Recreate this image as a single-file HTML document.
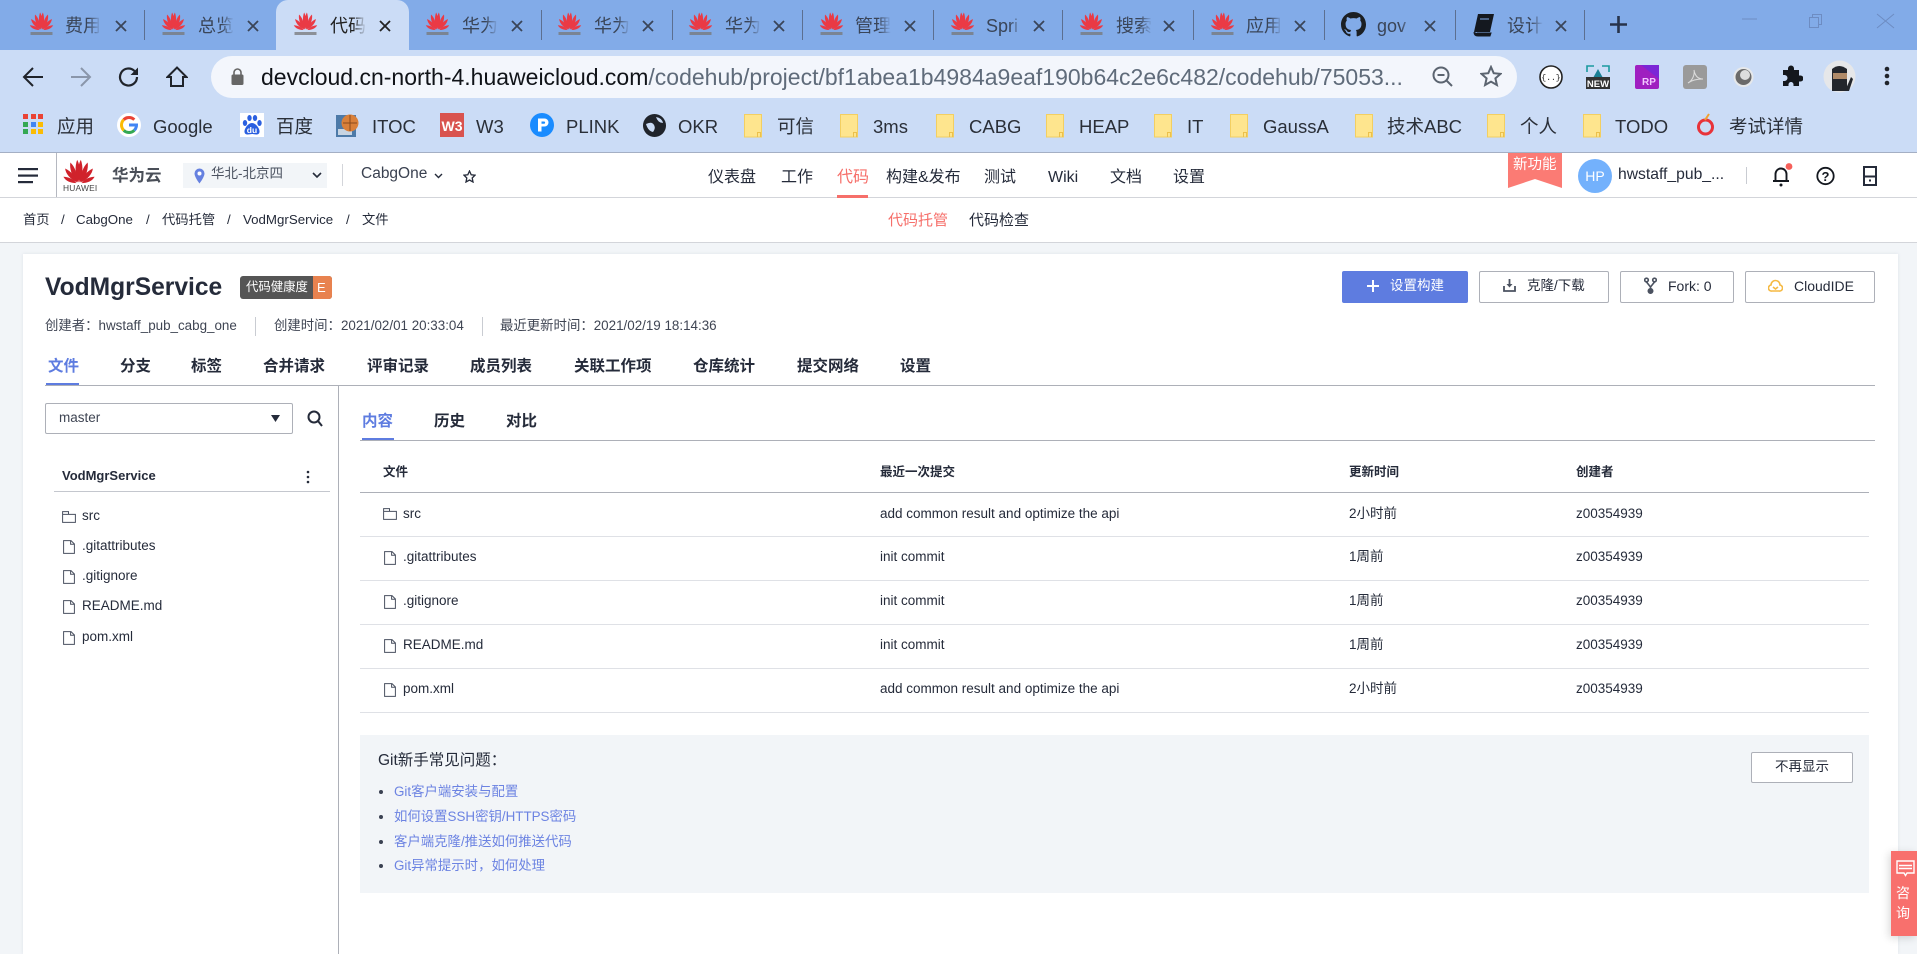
<!DOCTYPE html>
<html lang="zh"><head><meta charset="utf-8"><title>VodMgrService</title>
<style>
html,body{margin:0;padding:0;width:1917px;height:954px;overflow:hidden;background:#f2f5f8;font-family:"Liberation Sans","Noto Sans CJK SC",sans-serif;color:#252b3a}
.a{position:absolute}
.t{position:absolute;white-space:nowrap;line-height:20px;height:20px;margin-top:-10px}
.s{position:absolute}
.tabt{font-size:18px;color:#3a4558;overflow:hidden;width:36px;-webkit-mask-image:linear-gradient(90deg,#000 65%,transparent);mask-image:linear-gradient(90deg,#000 65%,transparent);line-height:24px;height:24px;margin-top:-12px}
.x{font-size:0}
.sep{position:absolute;top:10px;width:1px;height:30px;background:#5c6f90}
.bm{font-size:18.5px;color:#2a2f38}
.nav{font-size:16px;color:#252b3a}
.bc{font-size:13.3px;color:#252b3a}
.tb{font-size:15.5px;font-weight:700;color:#252b3a}
.cell{font-size:13.5px;color:#252b3a}
.th{font-size:12.5px;font-weight:700;color:#252b3a}
.ln{position:absolute;height:1px;background:#dfe1e6}
.btn{position:absolute;box-sizing:border-box;border:1px solid #adb0b8;border-radius:2px;background:#fff;height:32px;top:271px}
.link{font-size:13.4px;color:#6c83e2}
.dot{position:absolute;width:4px;height:4px;border-radius:50%;background:#3b4252;left:379px}
</style></head><body>
<svg width="0" height="0" style="position:absolute"><defs>
<symbol id="hw" viewBox="0 0 24 24"><g fill="#ea3a45"><path id="p1" d="M11.5 17.5C9 13 8.8 5 10.6 0.5C13 4 13 12 11.5 17.5Z"/><path d="M12.5 17.5C15 13 15.2 5 13.4 0.5C11 4 11 12 12.5 17.5Z"/><path d="M11 17.5C6.5 13 4.8 7 5.5 2.5C9 5.5 11 12 11 17.5Z"/><path d="M13 17.5C17.5 13 19.2 7 18.5 2.5C15 5.5 13 12 13 17.5Z"/><path d="M10.5 17.5C5.5 15 2 11 1.6 7C6 9 9.5 13 10.5 17.5Z"/><path d="M13.5 17.5C18.5 15 22 11 22.4 7C18 9 14.5 13 13.5 17.5Z"/><path d="M10 18C6 18 2 16.5 .3 13.2C4 13.2 8 15 10 18Z"/><path d="M14 18C18 18 22 16.5 23.7 13.2C20 13.2 16 15 14 18Z"/></g><rect x="1" y="20" width="22" height="3" fill="#777" opacity=".75"/></symbol>
<symbol id="xx" viewBox="0 0 12 12"><path d="M1 1L11 11M11 1L1 11" stroke="currentColor" stroke-width="1.8" fill="none"/></symbol>
<symbol id="fo" viewBox="0 0 18 24"><path d="M.5.5H17.5V23H.5Z" fill="#fee58e" stroke="#f3cf61"/><path d="M13.5 23V18.5h3V23" fill="none" stroke="#ecc04b"/></symbol>
<symbol id="fi" viewBox="0 0 12 14"><path d="M.6.6H8L11.4 4V13.4H.6ZM7.6.6V4.3H11.4" fill="none" stroke="#4a5160" stroke-width="1"/></symbol>
<symbol id="di" viewBox="0 0 14 12"><path d="M.6 3.4H13.4V11.4H.6ZM.6 3.4V.6H6.5V3.4" fill="none" stroke="#4a5160" stroke-width="1"/></symbol>
</defs></svg>

<!-- tab strip -->
<div class="a" style="left:0;top:0;width:1917px;height:50px;background:#82abe8"></div>
<div class="a" style="left:276px;top:0;width:133px;height:50px;background:#cbdcf6;border-radius:12px 12px 0 0"></div>
<svg class="s" style="left:29px;top:12px" width="25" height="24"><use href="#hw"/></svg><div class="t tabt" style="left:65px;top:26px">费用</div><svg class="s" style="left:115px;top:20px;color:#3a4558" width="12" height="12"><use href="#xx"/></svg><div class="sep" style="left:144px"></div>
<svg class="s" style="left:161px;top:12px" width="25" height="24"><use href="#hw"/></svg><div class="t tabt" style="left:198px;top:26px">总览</div><svg class="s" style="left:247px;top:20px;color:#3a4558" width="12" height="12"><use href="#xx"/></svg>
<svg class="s" style="left:293px;top:12px" width="25" height="24"><use href="#hw"/></svg><div class="t tabt" style="left:330px;top:26px;color:#222">代码</div><svg class="s" style="left:379px;top:20px;color:#222" width="12" height="12"><use href="#xx"/></svg>
<svg class="s" style="left:425px;top:12px" width="25" height="24"><use href="#hw"/></svg><div class="t tabt" style="left:462px;top:26px">华为</div><svg class="s" style="left:511px;top:20px;color:#3a4558" width="12" height="12"><use href="#xx"/></svg><div class="sep" style="left:541px"></div>
<svg class="s" style="left:557px;top:12px" width="25" height="24"><use href="#hw"/></svg><div class="t tabt" style="left:594px;top:26px">华为</div><svg class="s" style="left:642px;top:20px;color:#3a4558" width="12" height="12"><use href="#xx"/></svg><div class="sep" style="left:672px"></div>
<svg class="s" style="left:688px;top:12px" width="25" height="24"><use href="#hw"/></svg><div class="t tabt" style="left:725px;top:26px">华为</div><svg class="s" style="left:773px;top:20px;color:#3a4558" width="12" height="12"><use href="#xx"/></svg><div class="sep" style="left:802px"></div>
<svg class="s" style="left:819px;top:12px" width="25" height="24"><use href="#hw"/></svg><div class="t tabt" style="left:855px;top:26px">管理</div><svg class="s" style="left:904px;top:20px;color:#3a4558" width="12" height="12"><use href="#xx"/></svg><div class="sep" style="left:933px"></div>
<svg class="s" style="left:950px;top:12px" width="25" height="24"><use href="#hw"/></svg><div class="t tabt" style="left:986px;top:26px">Spri</div><svg class="s" style="left:1033px;top:20px;color:#3a4558" width="12" height="12"><use href="#xx"/></svg><div class="sep" style="left:1062px"></div>
<svg class="s" style="left:1079px;top:12px" width="25" height="24"><use href="#hw"/></svg><div class="t tabt" style="left:1116px;top:26px">搜索</div><svg class="s" style="left:1163px;top:20px;color:#3a4558" width="12" height="12"><use href="#xx"/></svg><div class="sep" style="left:1193px"></div>
<svg class="s" style="left:1210px;top:12px" width="25" height="24"><use href="#hw"/></svg><div class="t tabt" style="left:1246px;top:26px">应用</div><svg class="s" style="left:1294px;top:20px;color:#3a4558" width="12" height="12"><use href="#xx"/></svg><div class="sep" style="left:1324px"></div>
<svg class="s" style="left:1341px;top:12px" width="25" height="25" viewBox="0 0 16 16"><path fill="#1b1f23" d="M8 0C3.58 0 0 3.58 0 8c0 3.54 2.29 6.53 5.47 7.59.4.07.55-.17.55-.38v-1.34c-2.23.48-2.69-1.07-2.69-1.07-.36-.92-.89-1.17-.89-1.17-.73-.5.05-.49.05-.49.8.06 1.23.82 1.23.82.71 1.22 1.87.87 2.33.66.07-.52.28-.87.5-1.07-1.77-.2-3.64-.89-3.64-3.95 0-.87.31-1.59.82-2.15-.08-.2-.36-1.02.08-2.12 0 0 .67-.21 2.2.82.64-.18 1.32-.27 2-.27s1.36.09 2 .27c1.53-1.04 2.2-.82 2.2-.82.44 1.1.16 1.92.08 2.12.51.56.82 1.27.82 2.15 0 3.07-1.87 3.75-3.65 3.95.29.25.54.73.54 1.48v2.2c0 .21.15.46.55.38A8 8 0 0016 8c0-4.42-3.58-8-8-8z"/></svg><div class="t tabt" style="left:1377px;top:26px">gov</div><svg class="s" style="left:1424px;top:20px;color:#3a4558" width="12" height="12"><use href="#xx"/></svg><div class="sep" style="left:1455px"></div>
<svg class="s" style="left:1473px;top:13px" width="22" height="24" viewBox="0 0 22 24"><path d="M5 1H21L17 19H1Z" fill="#14181f"/><path d="M1 19C1 22 3 23 5 23H17L18 20H4" fill="#14181f" stroke="#14181f"/><path d="M7 6H16" stroke="#82abe8"/></svg><div class="t tabt" style="left:1507px;top:26px">设计</div><svg class="s" style="left:1555px;top:20px;color:#3a4558" width="12" height="12"><use href="#xx"/></svg><div class="sep" style="left:1584px"></div>
<svg class="s" style="left:1609px;top:15px" width="19" height="19"><path d="M9.5 1V18M1 9.5H18" stroke="#27334a" stroke-width="2.6"/></svg>
<svg class="s" style="left:1740px;top:0" width="160" height="32" fill="none" stroke="#6d8cc2" stroke-width="1"><path d="M2 19H17"/><path d="M69.500 17.500H78.500V27.500H69.500ZM72.500 17.500V14.500H81.500V24.500H78.500"/><path d="M137 14L154 28M154 14L137 28"/></svg>

<!-- toolbar -->
<div class="a" style="left:0;top:50px;width:1917px;height:102px;background:#cbdcf6"></div>
<div class="a" style="left:0;top:152px;width:1917px;height:1px;background:#a4afc4"></div>
<div class="a" style="left:211px;top:56px;width:1306px;height:42px;border-radius:21px;background:#f3f6fc"></div>
<svg class="s" style="left:22px;top:66px" width="22" height="22" fill="none" stroke="#20242b" stroke-width="2"><path d="M21 11H2M11 2L2 11L11 20"/></svg>
<svg class="s" style="left:70px;top:66px" width="22" height="22" fill="none" stroke="#8a96aa" stroke-width="2"><path d="M1 11H20M11 2L20 11L11 20"/></svg>
<svg class="s" style="left:118px;top:66px" width="22" height="22" fill="none" stroke="#20242b" stroke-width="2.2"><path d="M19 11A8.500 8.500 0 1 1 16.500 5L19 7.500"/><path d="M20 1.500V9H12.500Z" fill="#20242b" stroke="none"/></svg>
<svg class="s" style="left:166px;top:66px" width="22" height="22" fill="none" stroke="#20242b" stroke-width="2"><path d="M1.500 11L11 1.500L20.500 11H17V20H5V11Z"/></svg>
<svg class="s" style="left:231px;top:68px" width="13" height="18"><path d="M3 7V4.500A3.500 3.500 0 0 1 10 4.500V7" fill="none" stroke="#666" stroke-width="1.6"/><rect x="0.5" y="6.5" width="12" height="10.5" rx="1.5" fill="#666"/></svg>
<div class="t" style="left:261px;top:77px;font-size:23px;line-height:26px;height:26px;margin-top:-13px;color:#101318">devcloud.cn-north-4.huaweicloud.com<span style="color:#5f6b7a">/codehub/project/bf1abea1b4984a9eaf190b64c2e6c482/codehub/75053...</span></div>
<svg class="s" style="left:1432px;top:66px" width="22" height="22" fill="none" stroke="#5b6470" stroke-width="2"><circle cx="9" cy="9" r="7.5"/><path d="M14.500 14.500L20 20M5.500 9H12.500"/></svg>
<svg class="s" style="left:1480px;top:65px" width="22" height="22" fill="none" stroke="#5b6470" stroke-width="2"><path d="M11 2L13.700 8.200L20.500 8.900L15.400 13.400L16.900 20L11 16.600L5.100 20L6.600 13.400L1.500 8.900L8.300 8.200Z"/></svg>
<svg class="s" style="left:1539px;top:65px" width="24" height="24"><circle cx="12" cy="12" r="11" fill="#fff" stroke="#222" stroke-width="1.6"/><text x="12" y="15" text-anchor="middle" font-size="8" font-family="Liberation Mono" fill="#222">{..}</text></svg>
<svg class="s" style="left:1586px;top:65px" width="24" height="24"><path d="M1 7V1H8M16 1H23V7" fill="none" stroke="#1a9a9f" stroke-width="1.6"/><path d="M7 13L12 4L17 13Z" fill="#1a7f94"/><rect y="12" width="24" height="12" fill="#333"/><text x="12" y="22" text-anchor="middle" font-size="9.5" font-weight="700" fill="#fff">NEW</text></svg>
<svg class="s" style="left:1635px;top:65px" width="24" height="24"><rect width="24" height="24" rx="2" fill="#9f1fc0"/><path d="M6 0H24V14Z" fill="#7b26d6"/><text x="14" y="20" text-anchor="middle" font-size="10" font-weight="700" fill="#f2c8ff">RP</text></svg>
<svg class="s" style="left:1683px;top:65px" width="24" height="24"><rect width="24" height="24" rx="3" fill="#9a9a9a"/><path d="M5 18C9 16 12 10 11 5C12 11 15 14 20 14C14 14 9 15 5 18Z" fill="none" stroke="#ddd" stroke-width="1"/></svg>
<svg class="s" style="left:1732px;top:65px" width="23" height="24"><circle cx="11.5" cy="12" r="10" fill="#e6e8ea"/><circle cx="11.5" cy="12" r="8" fill="#6a6a6a"/><circle cx="13" cy="10" r="5" fill="#ddd"/></svg>
<svg class="s" style="left:1780px;top:65px" width="23" height="23"><path d="M8 3.500A3 3 0 0 1 14 3.500V5H19V10.500H20.500A3 3 0 0 1 20.500 16.500H19V21H13.500V19.500A2.500 2.500 0 0 0 8.500 19.500V21H3V16H4.500A3 3 0 0 0 4.500 10H3V5H8Z" fill="#14171c"/></svg>
<svg class="s" style="left:1823px;top:60px" width="33" height="33"><circle cx="16.5" cy="16.5" r="16" fill="#e6e7e9"/><path d="M9 9Q16 3 24 9V31H9Z" fill="#23262c"/><rect x="10" y="13" width="14" height="6" fill="#b08a68"/><path d="M22 31L28 17L30 19L26 31Z" fill="#23262c"/></svg>
<svg class="s" style="left:1884px;top:66px" width="6" height="20" fill="#20242b"><circle cx="3" cy="3" r="2.3"/><circle cx="3" cy="10" r="2.3"/><circle cx="3" cy="17" r="2.3"/></svg>

<!-- bookmarks -->
<svg class="s" style="left:23px;top:114px" width="20" height="20"><g><rect width="5" height="5" x="0" y="0" fill="#ea4335"/><rect width="5" height="5" x="8" y="0" fill="#ea4335"/><rect width="5" height="5" x="15" y="0" fill="#ea4335"/><rect width="5" height="5" x="0" y="8" fill="#34a853"/><rect width="5" height="5" x="8" y="8" fill="#4285f4"/><rect width="5" height="5" x="15" y="8" fill="#fbbc04"/><rect width="5" height="5" x="0" y="15" fill="#34a853"/><rect width="5" height="5" x="8" y="15" fill="#fbbc04"/><rect width="5" height="5" x="15" y="15" fill="#fbbc04"/></g></svg>
<div class="t bm" style="left:57px;top:127px">应用</div>
<svg class="s" style="left:117px;top:113px" width="24" height="24" viewBox="0 0 24 24" fill="none" stroke-width="3"><circle cx="12" cy="12" r="12" fill="#fff" stroke="none"/><path d="M12 12H19.500A7.500 7.500 0 0 1 17.300 17.300" stroke="#4285f4"/><path d="M17.300 17.300A7.500 7.500 0 0 1 6.700 17.300" stroke="#34a853"/><path d="M6.700 17.300A7.500 7.500 0 0 1 6.700 6.700" stroke="#fbbc04"/><path d="M6.700 6.700A7.500 7.500 0 0 1 17.300 6.700" stroke="#ea4335"/></svg>
<div class="t bm" style="left:153px;top:127px">Google</div>
<svg class="s" style="left:240px;top:113px" width="24" height="24"><rect width="24" height="24" fill="#fff"/><g fill="#2a5fe0"><ellipse cx="5" cy="10" rx="2.2" ry="3"/><ellipse cx="9.5" cy="5" rx="2.2" ry="3"/><ellipse cx="15" cy="5" rx="2.2" ry="3"/><ellipse cx="19.5" cy="10" rx="2.2" ry="3"/><path d="M12 10C8 10 4 16 4.500 19C5 23 10 21 12 21C14 21 19 23 19.500 19C20 16 16 10 12 10Z"/></g><text x="12" y="20" text-anchor="middle" font-size="8.5" font-weight="700" fill="#fff">du</text></svg>
<div class="t bm" style="left:276px;top:127px">百度</div>
<svg class="s" style="left:336px;top:113px" width="24" height="24"><rect x="0" y="2" width="20" height="22" fill="#4d7aa8"/><rect x="2" y="16" width="14" height="6" fill="#c7d4e2"/><circle cx="14" cy="10" r="8.5" fill="#d9803a"/><path d="M7 10H21M14 2V18" stroke="#8a4a1c"/></svg>
<div class="t bm" style="left:372px;top:127px">ITOC</div>
<svg class="s" style="left:440px;top:113px" width="24" height="24"><rect width="24" height="24" fill="#d9534f"/><text x="12" y="18" text-anchor="middle" font-size="14" font-weight="700" fill="#fff">W3</text></svg>
<div class="t bm" style="left:476px;top:127px">W3</div>
<svg class="s" style="left:530px;top:113px" width="24" height="24"><circle cx="12" cy="12" r="12" fill="#1a8cff"/><path d="M8 5.500H14.500A4 4 0 0 1 14.500 13.500H11.500V18.500H8ZM11.500 8.500V10.800H14A1.100 1.100 0 0 0 14 8.500Z" fill="#fff" fill-rule="evenodd"/></svg>
<div class="t bm" style="left:566px;top:127px">PLINK</div>
<svg class="s" style="left:643px;top:114px" width="23" height="23"><circle cx="11.5" cy="11.5" r="11.5" fill="#20242b"/><path d="M3 10Q9 7 11 11Q13 14 10 18Q5 17 3 10ZM13 3Q19 4 20 9Q15 9 13 3Z" fill="#cbdcf6"/></svg>
<div class="t bm" style="left:678px;top:127px">OKR</div>
<svg class="s" style="left:744px;top:114px" width="18" height="24"><use href="#fo"/></svg><div class="t bm" style="left:777px;top:127px">可信</div>
<svg class="s" style="left:840px;top:114px" width="18" height="24"><use href="#fo"/></svg><div class="t bm" style="left:873px;top:127px">3ms</div>
<svg class="s" style="left:936px;top:114px" width="18" height="24"><use href="#fo"/></svg><div class="t bm" style="left:969px;top:127px">CABG</div>
<svg class="s" style="left:1046px;top:114px" width="18" height="24"><use href="#fo"/></svg><div class="t bm" style="left:1079px;top:127px">HEAP</div>
<svg class="s" style="left:1154px;top:114px" width="18" height="24"><use href="#fo"/></svg><div class="t bm" style="left:1187px;top:127px">IT</div>
<svg class="s" style="left:1230px;top:114px" width="18" height="24"><use href="#fo"/></svg><div class="t bm" style="left:1263px;top:127px">GaussA</div>
<svg class="s" style="left:1355px;top:114px" width="18" height="24"><use href="#fo"/></svg><div class="t bm" style="left:1387px;top:127px">技术ABC</div>
<svg class="s" style="left:1487px;top:114px" width="18" height="24"><use href="#fo"/></svg><div class="t bm" style="left:1520px;top:127px">个人</div>
<svg class="s" style="left:1583px;top:114px" width="18" height="24"><use href="#fo"/></svg><div class="t bm" style="left:1615px;top:127px">TODO</div>
<svg class="s" style="left:1697px;top:113px" width="17" height="24"><circle cx="8.5" cy="14" r="7" fill="none" stroke="#e8333a" stroke-width="3"/><path d="M8 7L12 1" stroke="#f0a030" stroke-width="2"/></svg>
<div class="t bm" style="left:1729px;top:127px">考试详情</div>

<!-- app header -->
<div class="a" style="left:0;top:153px;width:1917px;height:44px;background:#fff"></div>
<div class="a" style="left:0;top:197px;width:1917px;height:1px;background:#d3d5da"></div>
<svg class="s" style="left:18px;top:168px" width="20" height="16" fill="#252b3a"><rect width="20" height="2.2" y="0"/><rect width="20" height="2.2" y="6.5"/><rect width="15" height="2.2" y="13"/></svg>
<div class="a" style="left:56px;top:153px;width:1px;height:44px;background:#b5b8c0"></div>
<svg class="s" style="left:63px;top:159px" width="32" height="27" viewBox="0 0 24 20"><g fill="#d0222b"><path d="M11.500 17.500C9 13 8.800 5 10.600 0.500C13 4 13 12 11.500 17.500Z"/><path d="M12.500 17.500C15 13 15.200 5 13.400 0.500C11 4 11 12 12.500 17.500Z"/><path d="M11 17.500C6.500 13 4.800 7 5.500 2.500C9 5.500 11 12 11 17.500Z"/><path d="M13 17.500C17.500 13 19.200 7 18.500 2.500C15 5.500 13 12 13 17.500Z"/><path d="M10.500 17.500C5.500 15 2 11 1.600 7C6 9 9.500 13 10.500 17.500Z"/><path d="M13.500 17.500C18.500 15 22 11 22.400 7C18 9 14.500 13 13.500 17.500Z"/><path d="M10 18C6 18 2 16.500 .3 13.200C4 13.200 8 15 10 18Z"/><path d="M14 18C18 18 22 16.500 23.700 13.200C20 13.200 16 15 14 18Z"/></g></svg>
<div class="t" style="left:63px;top:188px;font-size:8.4px;color:#444;line-height:10px;height:10px;margin-top:-5px;letter-spacing:.2px">HUAWEI</div>
<div class="t" style="left:112px;top:176px;font-size:16.5px;font-weight:700;color:#4a4f58">华为云</div>
<div class="a" style="left:183px;top:163px;width:144px;height:25px;background:#f2f5f8"></div>
<svg class="s" style="left:194px;top:168px" width="11" height="16"><path d="M5.500 0.500A5 5 0 0 1 10.500 5.500C10.500 9 5.500 15.500 5.500 15.500C5.500 15.500 .5 9 .5 5.500A5 5 0 0 1 5.500 .5Z" fill="#6681e0"/><circle cx="5.5" cy="5.5" r="2" fill="#fff"/></svg>
<div class="t" style="left:211px;top:174px;font-size:13.5px;color:#4b5260">华北-北京四</div>
<svg class="s" style="left:312px;top:172px" width="10" height="7" fill="none" stroke="#252b3a" stroke-width="1.6"><path d="M1 1L5 5L9 1"/></svg>
<div class="a" style="left:342px;top:164px;width:1px;height:22px;background:#d3d5da"></div>
<div class="t" style="left:361px;top:174px;font-size:15.5px;color:#3a4150">CabgOne</div>
<svg class="s" style="left:434px;top:173px" width="9" height="6" fill="none" stroke="#252b3a" stroke-width="1.4"><path d="M1 1L4.500 4.500L8 1"/></svg>
<svg class="s" style="left:463px;top:170px" width="13" height="13" fill="none" stroke="#252b3a" stroke-width="1.3"><path d="M6.500 1L8.200 4.800L12 5.200L9.200 8L10 12L6.500 10L3 12L3.800 8L1 5.200L4.800 4.800Z"/></svg>
<div class="t nav" style="left:708px;top:178px">仪表盘</div>
<div class="t nav" style="left:781px;top:178px">工作</div>
<div class="t nav" style="left:837px;top:178px;color:#f66f6a">代码</div>
<div class="a" style="left:837px;top:195px;width:31px;height:3px;background:#f66f6a"></div>
<div class="t nav" style="left:886px;top:178px">构建&amp;发布</div>
<div class="t nav" style="left:984px;top:178px">测试</div>
<div class="t nav" style="left:1048px;top:178px">Wiki</div>
<div class="t nav" style="left:1110px;top:178px">文档</div>
<div class="t nav" style="left:1173px;top:178px">设置</div>
<svg class="s" style="left:1508px;top:153px" width="54" height="35"><path d="M0 0H54V35L27 26L0 35Z" fill="#fb7b74"/></svg>
<div class="t" style="left:1513px;top:165px;font-size:14.5px;color:#fff">新功能</div>
<div class="a" style="left:1578px;top:159px;width:34px;height:34px;border-radius:50%;background:#73b1fc;color:#fff;font-size:14px;line-height:34px;text-align:center">HP</div>
<div class="t" style="left:1618px;top:175px;font-size:15.7px;color:#252b3a">hwstaff_pub_...</div>
<div class="a" style="left:1746px;top:167px;width:1px;height:17px;background:#c9ccd2"></div>
<svg class="s" style="left:1771px;top:163px" width="22" height="24" fill="none" stroke="#14181f" stroke-width="1.9"><path d="M2 18H18M4.500 18V11A5.500 5.500 0 0 1 15.500 11V18"/><circle cx="10" cy="22" r="1.5" fill="#14181f" stroke="none"/><circle cx="18" cy="3.5" r="3.4" fill="#f6605a" stroke="none"/></svg>
<svg class="s" style="left:1816px;top:166px" width="19" height="20"><circle cx="9.5" cy="10" r="8.2" fill="none" stroke="#14181f" stroke-width="1.8"/><text x="9.5" y="15" text-anchor="middle" font-size="13" font-weight="700" fill="#14181f">?</text></svg>
<svg class="s" style="left:1863px;top:166px" width="14" height="20" fill="none" stroke="#252b3a" stroke-width="2"><rect x="1" y="1" width="12" height="18"/><path d="M1 10.500H13"/><rect x="6" y="13.5" width="2" height="2" fill="#252b3a" stroke="none"/></svg>

<!-- breadcrumb -->
<div class="a" style="left:0;top:198px;width:1917px;height:44px;background:#fff"></div>
<div class="a" style="left:0;top:242px;width:1917px;height:1px;background:#d3d5da"></div>
<div class="t bc" style="left:23px;top:220px">首页</div>
<div class="t bc" style="left:61px;top:220px">/</div>
<div class="t bc" style="left:76px;top:220px">CabgOne</div>
<div class="t bc" style="left:146px;top:220px">/</div>
<div class="t bc" style="left:162px;top:220px">代码托管</div>
<div class="t bc" style="left:227px;top:220px">/</div>
<div class="t bc" style="left:243px;top:220px">VodMgrService</div>
<div class="t bc" style="left:346px;top:220px">/</div>
<div class="t bc" style="left:362px;top:220px">文件</div>
<div class="t" style="left:888px;top:221px;font-size:15px;color:#f66f6a">代码托管</div>
<div class="t" style="left:969px;top:221px;font-size:15px;color:#252b3a">代码检查</div>

<!-- card -->
<div class="a" style="left:23px;top:254px;width:1875px;height:700px;background:#fff;box-shadow:0 0 3px rgba(180,185,200,.3)"></div>
<div class="t" style="left:45px;top:288px;font-size:24.6px;font-weight:700;color:#252b3a;line-height:30px;height:30px;margin-top:-15px">VodMgrService</div>
<div class="a" style="left:240px;top:276px;width:92px;height:23px;border-radius:3px;background:#555;overflow:hidden"><div class="a" style="left:73px;top:0;width:19px;height:23px;background:#e8824f"></div></div>
<div class="t" style="left:246px;top:287px;font-size:12.4px;color:#fff">代码健康度</div>
<div class="t" style="left:317px;top:288px;font-size:13px;color:#fff">E</div>
<div class="t" style="left:45px;top:326px;font-size:13.4px;color:#3f4553">创建者：hwstaff_pub_cabg_one</div>
<div class="a" style="left:255px;top:317px;width:1px;height:19px;background:#c9ccd2"></div>
<div class="t" style="left:274px;top:326px;font-size:13.4px;color:#3f4553">创建时间：2021/02/01 20:33:04</div>
<div class="a" style="left:482px;top:317px;width:1px;height:19px;background:#c9ccd2"></div>
<div class="t" style="left:500px;top:326px;font-size:13.4px;color:#3f4553">最近更新时间：2021/02/19 18:14:36</div>

<div class="a" style="left:1342px;top:271px;width:126px;height:32px;background:#5e7ce0;border-radius:2px"></div>
<svg class="s" style="left:1367px;top:280px" width="12" height="12"><path d="M6 0V12M0 6H12" stroke="#fff" stroke-width="2"/></svg>
<div class="t" style="left:1390px;top:286px;font-size:13.5px;color:#fff">设置构建</div>
<div class="btn" style="left:1479px;width:130px"></div>
<svg class="s" style="left:1503px;top:279px" width="13" height="13" fill="none" stroke="#4b5260" stroke-width="1.8"><path d="M1 7V12H12V7M6.500 0V7"/><path d="M3.500 5L6.500 8.500L9.500 5Z" fill="#4b5260" stroke="none"/></svg>
<div class="t" style="left:1527px;top:286px;font-size:13.5px">克隆/下载</div>
<div class="btn" style="left:1620px;width:114px"></div>
<svg class="s" style="left:1644px;top:277px" width="13" height="17" fill="none" stroke="#4b5260" stroke-width="1.6"><circle cx="2.5" cy="3" r="1.8"/><circle cx="10.5" cy="3" r="1.8"/><path d="M2.500 5L6.500 10L10.500 5M6.500 10V13"/><circle cx="6.5" cy="14" r="2.2" fill="#4b5260"/></svg>
<div class="t" style="left:1668px;top:286px;font-size:14px">Fork: 0</div>
<div class="btn" style="left:1745px;width:130px"></div>
<svg class="s" style="left:1768px;top:277px" width="15" height="16" fill="none" stroke="#f5b942" stroke-width="1.6"><path d="M4 14A3 3 0 0 1 3 8A4.500 4.500 0 0 1 12 8A3 3 0 0 1 11 14Z"/><path d="M5 10L7.500 12L10 10"/></svg>
<div class="t" style="left:1794px;top:286px;font-size:14px">CloudIDE</div>

<div class="t tb" style="left:48px;top:367px;color:#5e7ce0">文件</div>
<div class="a" style="left:46px;top:383px;width:33px;height:2px;background:#5e7ce0"></div>
<div class="t tb" style="left:120px;top:367px">分支</div>
<div class="t tb" style="left:191px;top:367px">标签</div>
<div class="t tb" style="left:263px;top:367px">合并请求</div>
<div class="t tb" style="left:367px;top:367px">评审记录</div>
<div class="t tb" style="left:470px;top:367px">成员列表</div>
<div class="t tb" style="left:574px;top:367px">关联工作项</div>
<div class="t tb" style="left:693px;top:367px">仓库统计</div>
<div class="t tb" style="left:797px;top:367px">提交网络</div>
<div class="t tb" style="left:900px;top:367px">设置</div>
<div class="a" style="left:45px;top:385px;width:1830px;height:1px;background:#adb0b8"></div>
<div class="a" style="left:338px;top:385px;width:1px;height:569px;background:#adb0b8"></div>

<!-- left tree -->
<div class="a" style="left:45px;top:403px;width:248px;height:31px;box-sizing:border-box;border:1px solid #adb0b8;border-radius:2px"></div>
<div class="t" style="left:59px;top:418px;font-size:13.5px;color:#3f4553">master</div>
<svg class="s" style="left:271px;top:415px" width="9" height="7"><path d="M0 0H9L4.500 7Z" fill="#252b3a"/></svg>
<svg class="s" style="left:307px;top:410px" width="16" height="17" fill="none" stroke="#252b3a" stroke-width="2"><circle cx="7" cy="7" r="5.5"/><path d="M11 11L15 16"/></svg>
<div class="t" style="left:62px;top:476px;font-size:13px;font-weight:700">VodMgrService</div>
<svg class="s" style="left:306px;top:470px" width="4" height="14" fill="#252b3a"><circle cx="2" cy="2" r="1.3"/><circle cx="2" cy="7" r="1.3"/><circle cx="2" cy="12" r="1.3"/></svg>
<div class="a" style="left:54px;top:491px;width:276px;height:1px;background:#c4c7ce"></div>
<svg class="s" style="left:62px;top:511px" width="14" height="12"><use href="#di"/></svg><div class="t cell" style="left:82px;top:516px">src</div>
<svg class="s" style="left:63px;top:540px" width="12" height="14"><use href="#fi"/></svg><div class="t cell" style="left:82px;top:546px">.gitattributes</div>
<svg class="s" style="left:63px;top:570px" width="12" height="14"><use href="#fi"/></svg><div class="t cell" style="left:82px;top:576px">.gitignore</div>
<svg class="s" style="left:63px;top:600px" width="12" height="14"><use href="#fi"/></svg><div class="t cell" style="left:82px;top:606px">README.md</div>
<svg class="s" style="left:63px;top:631px" width="12" height="14"><use href="#fi"/></svg><div class="t cell" style="left:82px;top:637px">pom.xml</div>

<!-- right -->
<div class="t" style="left:362px;top:422px;font-size:15.5px;font-weight:700;color:#5e7ce0">内容</div>
<div class="t" style="left:434px;top:422px;font-size:15.5px;font-weight:700">历史</div>
<div class="t" style="left:506px;top:422px;font-size:15.5px;font-weight:700">对比</div>
<div class="a" style="left:360px;top:440px;width:1515px;height:1px;background:#adb0b8"></div>
<div class="a" style="left:362px;top:438px;width:32px;height:2px;background:#5e7ce0"></div>
<div class="t th" style="left:383px;top:472px">文件</div>
<div class="t th" style="left:880px;top:472px">最近一次提交</div>
<div class="t th" style="left:1349px;top:472px">更新时间</div>
<div class="t th" style="left:1576px;top:472px">创建者</div>
<div class="a" style="left:360px;top:492px;width:1509px;height:1px;background:#adb0b8"></div>

<svg class="s" style="left:383px;top:508px" width="14" height="12"><use href="#di"/></svg><div class="t cell" style="left:403px;top:514px">src</div><div class="t cell" style="left:880px;top:514px">add common result and optimize the api</div><div class="t cell" style="left:1349px;top:514px">2小时前</div><div class="t cell" style="left:1576px;top:514px">z00354939</div>
<div class="ln" style="left:360px;top:536px;width:1509px"></div>
<svg class="s" style="left:384px;top:551px" width="12" height="14"><use href="#fi"/></svg><div class="t cell" style="left:403px;top:557px">.gitattributes</div><div class="t cell" style="left:880px;top:557px">init commit</div><div class="t cell" style="left:1349px;top:557px">1周前</div><div class="t cell" style="left:1576px;top:557px">z00354939</div>
<div class="ln" style="left:360px;top:580px;width:1509px"></div>
<svg class="s" style="left:384px;top:595px" width="12" height="14"><use href="#fi"/></svg><div class="t cell" style="left:403px;top:601px">.gitignore</div><div class="t cell" style="left:880px;top:601px">init commit</div><div class="t cell" style="left:1349px;top:601px">1周前</div><div class="t cell" style="left:1576px;top:601px">z00354939</div>
<div class="ln" style="left:360px;top:624px;width:1509px"></div>
<svg class="s" style="left:384px;top:639px" width="12" height="14"><use href="#fi"/></svg><div class="t cell" style="left:403px;top:645px">README.md</div><div class="t cell" style="left:880px;top:645px">init commit</div><div class="t cell" style="left:1349px;top:645px">1周前</div><div class="t cell" style="left:1576px;top:645px">z00354939</div>
<div class="ln" style="left:360px;top:668px;width:1509px"></div>
<svg class="s" style="left:384px;top:683px" width="12" height="14"><use href="#fi"/></svg><div class="t cell" style="left:403px;top:689px">pom.xml</div><div class="t cell" style="left:880px;top:689px">add common result and optimize the api</div><div class="t cell" style="left:1349px;top:689px">2小时前</div><div class="t cell" style="left:1576px;top:689px">z00354939</div>
<div class="ln" style="left:360px;top:712px;width:1509px"></div>

<!-- FAQ -->
<div class="a" style="left:360px;top:735px;width:1509px;height:158px;background:#f2f5f8"></div>
<div class="t" style="left:378px;top:761px;font-size:15.5px;color:#252b3a">Git新手常见问题：</div>
<div class="dot" style="top:790px"></div><div class="t link" style="left:394px;top:792px">Git客户端安装与配置</div>
<div class="dot" style="top:815px"></div><div class="t link" style="left:394px;top:817px">如何设置SSH密钥/HTTPS密码</div>
<div class="dot" style="top:840px"></div><div class="t link" style="left:394px;top:842px">客户端克隆/推送如何推送代码</div>
<div class="dot" style="top:864px"></div><div class="t link" style="left:394px;top:866px">Git异常提示时，如何处理</div>
<div class="a" style="left:1751px;top:752px;width:102px;height:31px;box-sizing:border-box;border:1px solid #adb0b8;border-radius:2px;background:#fff"></div>
<div class="t" style="left:1775px;top:767px;font-size:13.5px;color:#252b3a">不再显示</div>

<!-- consult -->
<div class="a" style="left:1891px;top:851px;width:26px;height:85px;background:#f8706d;box-shadow:-2px 2px 8px rgba(0,0,0,.15)"></div>
<svg class="s" style="left:1896px;top:860px" width="19" height="17" fill="none" stroke="#fff" stroke-width="1.4"><path d="M1 1H18V13H11L9.500 15.500L8 13H1Z"/><path d="M3 5.500H16M3 8.500H16"/></svg>
<div class="t" style="left:1896px;top:893px;font-size:14px;color:#fff">咨</div>
<div class="t" style="left:1896px;top:913px;font-size:14px;color:#fff">询</div>
</body></html>
